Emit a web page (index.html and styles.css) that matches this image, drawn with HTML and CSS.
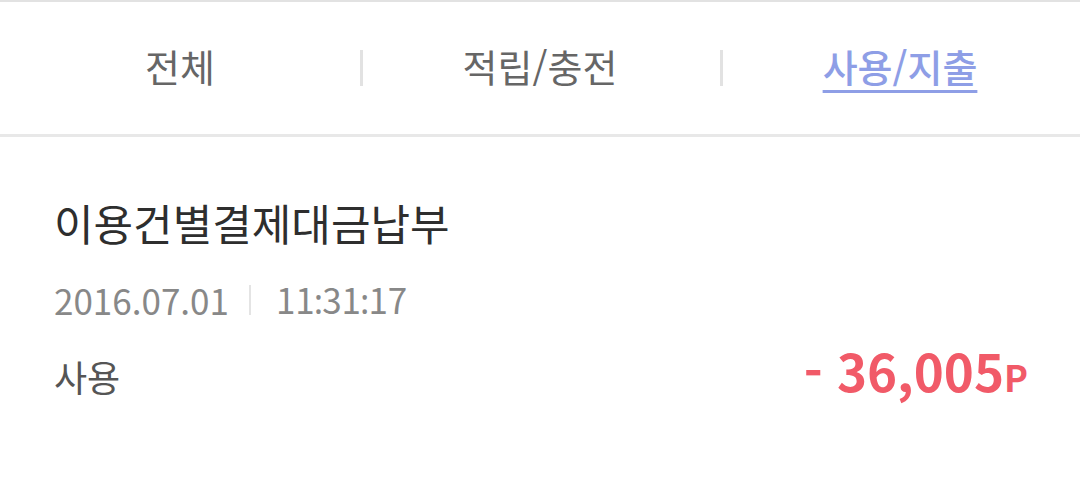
FILE: index.html
```html
<!DOCTYPE html>
<html lang="ko">
<head>
    <meta charset="UTF-8">
    <meta name="viewport" content="width=device-width, initial-scale=1.0">
    <title>포인트 내역</title>
    <link rel="stylesheet" href="styles.css">
</head>
<body>
    <div class="point-history">
        <nav class="tabs">
            <a class="tab">전체</a>
            <a class="tab">적립/충전</a>
            <a class="tab active">사용/지출</a>
        </nav>

        <ul class="history-list">
            <li class="history-item">
                <h2 class="item-title">이용건별결제대금납부</h2>
                <p class="item-date">
                    <span>2016.07.01</span>
                    <span class="sep"></span>
                    <span>11<i class="colon">:</i>31<i class="colon">:</i>17</span>
                </p>
                <div class="item-bottom">
                    <span class="item-type">사용</span>
                    <span class="item-amount">- 36,005<small>P</small></span>
                </div>
            </li>
        </ul>
    </div>
</body>
</html>
```

FILE: styles.css
```css
* {
    margin: 0;
    padding: 0;
    box-sizing: border-box;
    font-family: 'Noto Sans CJK KR', 'Noto Sans', sans-serif;
}

body {
    background: #fff;
    color: #333;
}

/* Tabs */
.tabs {
    display: flex;
    height: 137px;
    border-top: 2px solid #e2e2e2;
    border-bottom: 3px solid #e8e8e8;
    align-items: center;
}

.tab {
    flex: 1;
    position: relative;
    text-align: center;
    font-size: 38px;
    color: #666;
    line-height: 1;
    margin-top: -4px;
}

.tab + .tab::before {
    content: '';
    position: absolute;
    left: 0;
    top: 50%;
    width: 3px;
    height: 36px;
    margin-top: -16px;
    background: #e2e2e2;
}

.tab.active {
    color: #8e9ee6;
    font-weight: 500;
    text-decoration: underline;
    text-decoration-thickness: 3px;
    text-underline-offset: 8px;
}

/* List */
.history-list {
    list-style: none;
}

.history-item {
    padding: 60px 52px 40px 54px;
}

.item-title {
    font-size: 43px;
    font-weight: 400;
    color: #2e2e2e;
    line-height: 1.2;
}

.item-date {
    display: flex;
    align-items: center;
    margin-top: 29px;
    font-size: 35px;
    color: #888;
    line-height: 1.2;
}

.item-date .colon {
    font-style: normal;
    font-family: 'Noto Sans', sans-serif;
    margin: 0 -1px;
}

.item-date .sep {
    width: 2px;
    height: 30px;
    margin: 0 25px 0 20px;
    background: #e4e4e4;
}

.item-bottom {
    display: flex;
    justify-content: space-between;
    align-items: baseline;
    margin-top: 11px;
}

.item-type {
    font-size: 36px;
    color: #555;
}

.item-amount {
    font-size: 51px;
    font-weight: 700;
    color: #f15a68;
}

.item-amount small {
    font-size: 36px;
}
```
